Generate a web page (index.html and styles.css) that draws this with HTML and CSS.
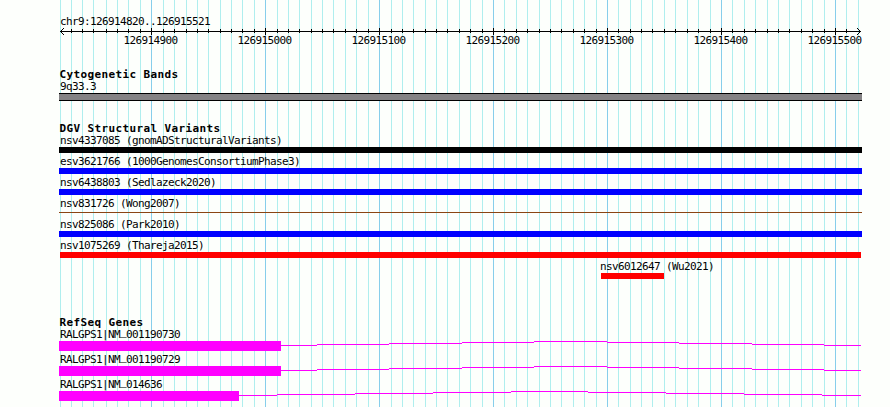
FILE: index.html
```html
<!DOCTYPE html>
<html lang="en">
<head>
    <meta charset="UTF-8">
    <title>chr9:126914820..126915521</title>
    <link rel="stylesheet" href="styles.css">
</head>
<body>
    <div class="browser">
        <!-- Grid lines every 10bp, darker every 100bp -->
        <svg class="grid" width="890" height="407">
            <path class="minor" d="M60.5 0v407M71.5 0v407M82.5 0v407M93.5 0v407M106.5 0v407M117.5 0v407M128.5 0v407M140.5 0v407M163.5 0v407M174.5 0v407M186.5 0v407M197.5 0v407M208.5 0v407M220.5 0v407M231.5 0v407M242.5 0v407M254.5 0v407M277.5 0v407M288.5 0v407M299.5 0v407M311.5 0v407M322.5 0v407M333.5 0v407M345.5 0v407M356.5 0v407M368.5 0v407M391.5 0v407M402.5 0v407M413.5 0v407M425.5 0v407M436.5 0v407M447.5 0v407M459.5 0v407M470.5 0v407M482.5 0v407M504.5 0v407M516.5 0v407M527.5 0v407M539.5 0v407M550.5 0v407M561.5 0v407M573.5 0v407M584.5 0v407M596.5 0v407M618.5 0v407M630.5 0v407M641.5 0v407M652.5 0v407M664.5 0v407M675.5 0v407M687.5 0v407M698.5 0v407M710.5 0v407M732.5 0v407M744.5 0v407M755.5 0v407M767.5 0v407M778.5 0v407M789.5 0v407M801.5 0v407M812.5 0v407M824.5 0v407M846.5 0v407M858.5 0v407"/>
            <path class="major" d="M151.5 0v407M265.5 0v407M379.5 0v407M493.5 0v407M607.5 0v407M721.5 0v407M835.5 0v407"/>
        </svg>

        <div class="label">chr9:126914820..126915521</div>
        <svg class="ruler" width="890" height="20" viewBox="0 28 890 20">
            <path d="M60 31.5H861M64 28l-3.5 3.5l3.5 3.5M857 28l3.5 3.5l-3.5 3.5"/>
            <path d="M71.5 29v4M82.5 29v4M93.5 29v4M106.5 29v4M117.5 29v4M128.5 29v4M140.5 29v4M163.5 29v4M174.5 29v4M186.5 29v4M197.5 29v4M208.5 29v4M220.5 29v4M231.5 29v4M242.5 29v4M254.5 29v4M277.5 29v4M288.5 29v4M299.5 29v4M311.5 29v4M322.5 29v4M333.5 29v4M345.5 29v4M356.5 29v4M368.5 29v4M391.5 29v4M402.5 29v4M413.5 29v4M425.5 29v4M436.5 29v4M447.5 29v4M459.5 29v4M470.5 29v4M482.5 29v4M504.5 29v4M516.5 29v4M527.5 29v4M539.5 29v4M550.5 29v4M561.5 29v4M573.5 29v4M584.5 29v4M596.5 29v4M618.5 29v4M630.5 29v4M641.5 29v4M652.5 29v4M664.5 29v4M675.5 29v4M687.5 29v4M698.5 29v4M710.5 29v4M732.5 29v4M744.5 29v4M755.5 29v4M767.5 29v4M778.5 29v4M789.5 29v4M801.5 29v4M812.5 29v4M824.5 29v4M846.5 29v4"/>
            <path d="M151.5 28v7M265.5 28v7M379.5 28v7M493.5 28v7M607.5 28v7M721.5 28v7M835.5 28v7"/>
            <text x="123.4" y="44">126914900</text>
            <text x="237.4" y="44">126915000</text>
            <text x="351.4" y="44">126915100</text>
            <text x="465.4" y="44">126915200</text>
            <text x="579.4" y="44">126915300</text>
            <text x="693.4" y="44">126915400</text>
            <text x="807.4" y="44">126915500</text>
        </svg>

        <div class="track bands">
            <h2>Cytogenetic Bands</h2>
            <div class="label">9q33.3</div>
            <div class="band"></div>
        </div>

        <div class="track variants">
            <h2>DGV Structural Variants</h2>
            <div class="variant">
                <div class="label">nsv4337085 (gnomADStructuralVariants)</div>
                <div class="bar black"></div>
            </div>
            <div class="variant">
                <div class="label">esv3621766 (1000GenomesConsortiumPhase3)</div>
                <div class="bar blue"></div>
            </div>
            <div class="variant">
                <div class="label">nsv6438803 (Sedlazeck2020)</div>
                <div class="bar blue"></div>
            </div>
            <div class="variant">
                <div class="label">nsv831726 (Wong2007)</div>
                <div class="bar thin"></div>
            </div>
            <div class="variant">
                <div class="label">nsv825086 (Park2010)</div>
                <div class="bar blue"></div>
            </div>
            <div class="variant">
                <div class="label">nsv1075269 (Thareja2015)</div>
                <div class="bar red"></div>
            </div>
            <div class="variant partial">
                <div class="label">nsv6012647 (Wu2021)</div>
                <div class="bar red"></div>
            </div>
        </div>

        <div class="track genes">
            <h2>RefSeq Genes</h2>
            <div class="gene">
                <div class="label">RALGPS1|NM<span class="underscore">_</span>001190730</div>
                <svg width="890" height="10">
                    <rect x="59" y="0" width="222" height="10"/>
                    <path d="M281 4.5H317M317 3.5H389M389 2.5H462M462 1.5H534M534 .5H607M607 1.5H679M679 2.5H752M752 3.5H824M824 4.5H861"/>
                </svg>
            </div>
            <div class="gene">
                <div class="label">RALGPS1|NM<span class="underscore">_</span>001190729</div>
                <svg width="890" height="10">
                    <rect x="59" y="0" width="222" height="10"/>
                    <path d="M281 4.5H317M317 3.5H389M389 2.5H462M462 1.5H534M534 .5H607M607 1.5H679M679 2.5H752M752 3.5H824M824 4.5H861"/>
                </svg>
            </div>
            <div class="gene">
                <div class="label">RALGPS1|NM<span class="underscore">_</span>014636</div>
                <svg width="890" height="10">
                    <rect x="59" y="0" width="180" height="10"/>
                    <path d="M239 4.5H277M277 3.5H355M355 2.5H433M433 1.5H511M511 .5H588M588 1.5H666M666 2.5H744M744 3.5H822M822 4.5H861"/>
                </svg>
            </div>
        </div>
    </div>
</body>
</html>
```

FILE: styles.css
```css
body {
    margin: 0;
    background-color: #fdfffc;
    color: #000;
    font-family: "DejaVu Sans Mono", monospace;
    font-size: 11px;
}
.browser {
    position: relative;
    box-sizing: border-box;
    width: 890px;
    height: 407px;
    padding-top: 15px;
    overflow: hidden;
}
svg {
    display: block;
}
.grid {
    position: absolute;
    top: 0;
    left: 0;
    z-index: -1;
}
.minor {
    stroke: #afeeee;
}
.major {
    stroke: #87ceeb;
}
.ruler path {
    fill: none;
    stroke: #000;
}
.label, .ruler text {
    letter-spacing: -0.62px;
    white-space: pre;
}
.label {
    height: 13px;
    line-height: 13px;
    padding-left: 60px;
}
/* keep the underscore clear of the bar below */
.underscore {
    font-family: "Liberation Mono", monospace;
    font-weight: bold;
    vertical-align: 1px;
    line-height: 0;
}
h2 {
    height: 12px;
    margin: 0;
    padding-left: 59.4px;
    font-size: 11px;
    line-height: 13px;
    letter-spacing: 0.38px;
}
.bands {
    margin-top: 20px;
}
.band {
    box-sizing: border-box;
    width: 803px;
    height: 8px;
    margin-left: 59px;
    background-color: #848284;
    border: 1px solid #000;
    border-width: 1px 0;
}
.variants {
    margin-top: 21px;
}
.variant {
    height: 21px;
}
.bar {
    width: 803px;
    height: 6px;
    margin-left: 59px;
}
.black {
    background-color: #000;
}
.blue {
    background-color: #00f;
}
.red {
    width: 801px;
    margin-left: 60px;
    background-color: #f00;
}
.thin {
    height: 1px;
    margin-top: 2px;
    background-color: #8b4513;
}
.partial .label {
    padding-left: 600px;
}
.partial .bar {
    width: 63px;
    margin-left: 601px;
}
.genes {
    margin-top: 35px;
}
.gene {
    height: 25px;
}
.gene rect {
    fill: #f0f;
}
.gene path {
    stroke: #f0f;
}
```
